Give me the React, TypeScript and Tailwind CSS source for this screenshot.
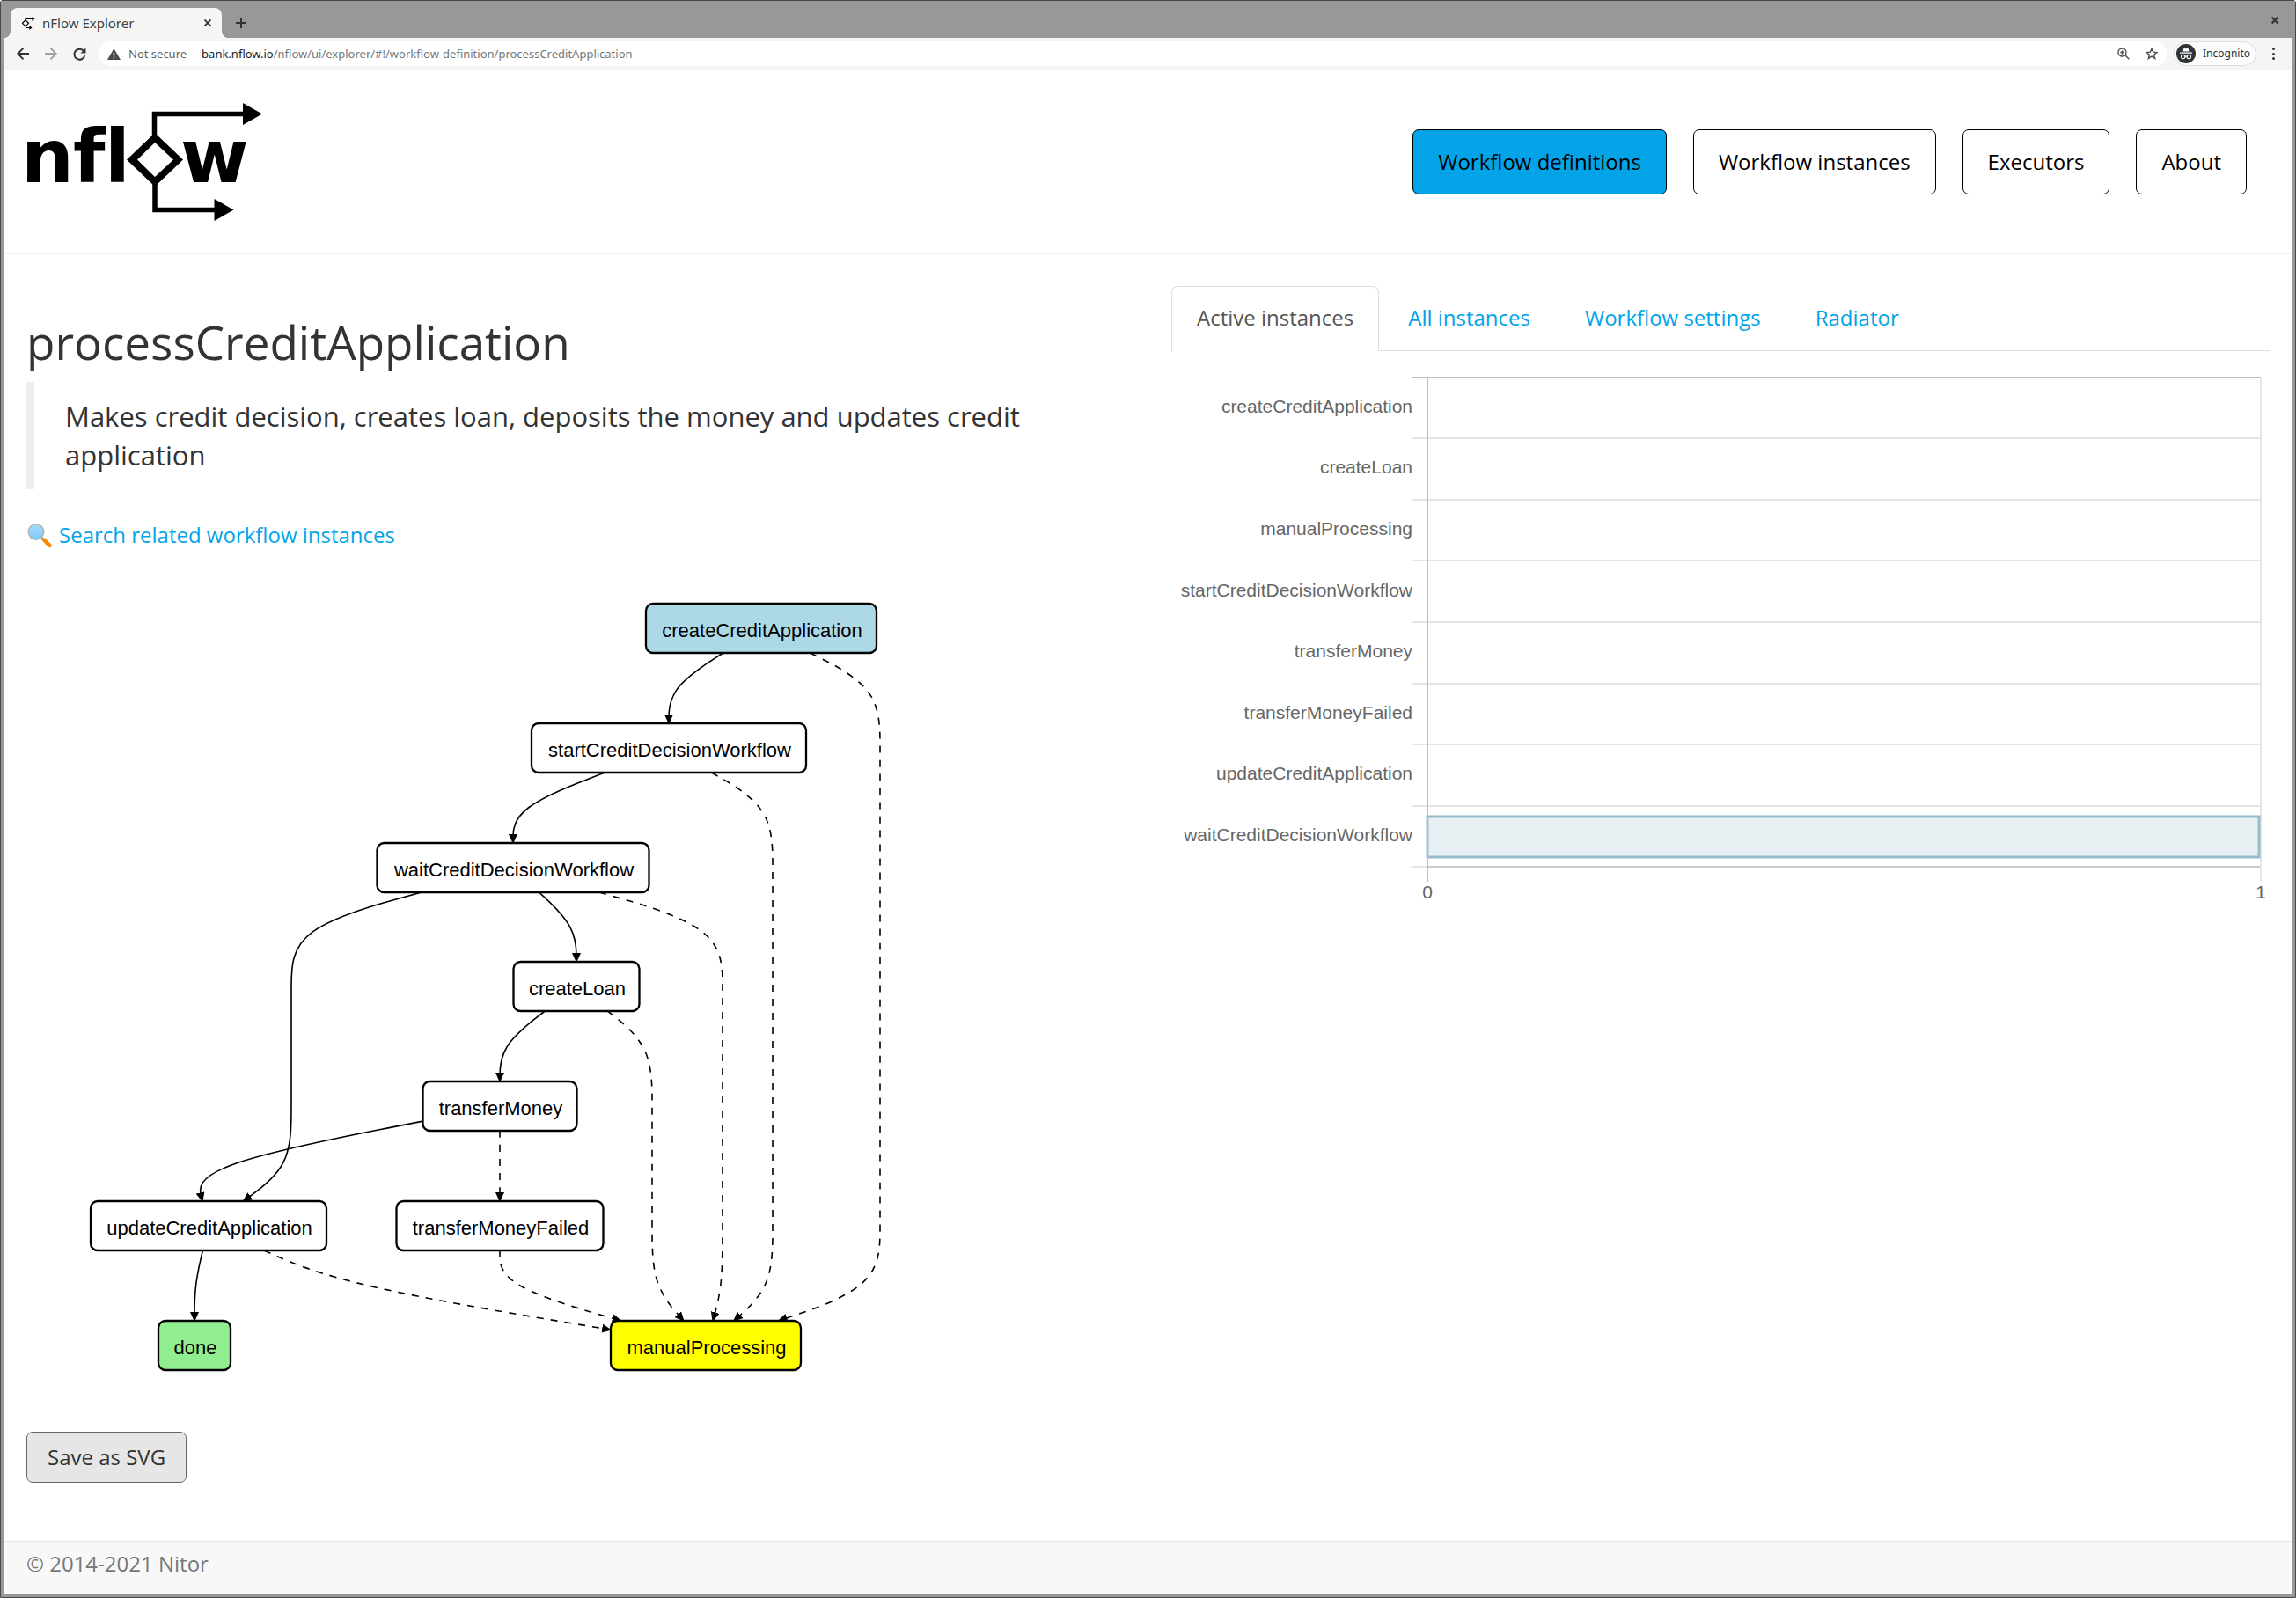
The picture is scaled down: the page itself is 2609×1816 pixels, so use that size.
import React from "react";

type Pt = [number, number];

type NodeSpec = {
  id: string;
  cx: number;
  cy: number;
  w: number;
  fill?: string;
};

const NODE_H = 56;

const NODES: NodeSpec[] = [
  { id: "createCreditApplication", cx: 865, cy: 715, w: 262, fill: "#add8e6" },
  { id: "startCreditDecisionWorkflow", cx: 760, cy: 851, w: 312 },
  { id: "waitCreditDecisionWorkflow", cx: 583, cy: 987, w: 309 },
  { id: "createLoan", cx: 655, cy: 1122, w: 143 },
  { id: "transferMoney", cx: 568, cy: 1258, w: 175 },
  { id: "updateCreditApplication", cx: 237, cy: 1394, w: 268 },
  { id: "transferMoneyFailed", cx: 568, cy: 1394, w: 235 },
  { id: "done", cx: 221, cy: 1530, w: 82, fill: "#90ee90" },
  { id: "manualProcessing", cx: 802, cy: 1530, w: 216, fill: "#ffff00" },
];

type EdgeSpec = { from: string; to: string; x: number; dashed?: boolean };

const EDGES: EdgeSpec[] = [
  { from: "createCreditApplication", to: "startCreditDecisionWorkflow", x: 760 },
  { from: "createCreditApplication", to: "manualProcessing", x: 1000, dashed: true },
  { from: "startCreditDecisionWorkflow", to: "waitCreditDecisionWorkflow", x: 583 },
  { from: "startCreditDecisionWorkflow", to: "manualProcessing", x: 878, dashed: true },
  { from: "waitCreditDecisionWorkflow", to: "createLoan", x: 655 },
  { from: "waitCreditDecisionWorkflow", to: "updateCreditApplication", x: 331 },
  { from: "waitCreditDecisionWorkflow", to: "manualProcessing", x: 821, dashed: true },
  { from: "createLoan", to: "transferMoney", x: 568 },
  { from: "createLoan", to: "manualProcessing", x: 741, dashed: true },
  { from: "transferMoney", to: "updateCreditApplication", x: 220 },
  { from: "transferMoney", to: "transferMoneyFailed", x: 568, dashed: true },
  { from: "updateCreditApplication", to: "done", x: 221 },
  { from: "updateCreditApplication", to: "manualProcessing", x: 390, dashed: true },
  { from: "transferMoneyFailed", to: "manualProcessing", x: 568, dashed: true },
];

const nodeById = (id: string) => NODES.find((n) => n.id === id) as NodeSpec;

/** Point where the line from a node's centre to `p` leaves the node's box. */
function boundary(n: NodeSpec, p: Pt): Pt {
  const dx = p[0] - n.cx;
  const dy = p[1] - n.cy;
  const s = Math.min(
    dx === 0 ? Infinity : n.w / 2 / Math.abs(dx),
    dy === 0 ? Infinity : NODE_H / 2 / Math.abs(dy),
  );
  return [n.cx + dx * s, n.cy + dy * s];
}

/** Cubic B-spline that starts and ends on the outer points. */
function basis(pts: Pt[]): string {
  const f = (v: number) => v.toFixed(1);
  let [x0, y0] = pts[0];
  let [x1, y1] = pts[1];
  let d = `M${f(x0)},${f(y0)}L${f((5 * x0 + x1) / 6)},${f((5 * y0 + y1) / 6)}`;
  const step = (x: number, y: number) => {
    d += `C${f((2 * x0 + x1) / 3)},${f((2 * y0 + y1) / 3)} ${f((x0 + 2 * x1) / 3)},${f((y0 + 2 * y1) / 3)} ${f((x0 + 4 * x1 + x) / 6)},${f((y0 + 4 * y1 + y) / 6)}`;
    x0 = x1;
    y0 = y1;
    x1 = x;
    y1 = y;
  };
  for (let i = 2; i < pts.length; i++) step(pts[i][0], pts[i][1]);
  const last = pts[pts.length - 1];
  step(last[0], last[1]);
  return d + `L${f(last[0])},${f(last[1])}`;
}

function edgePath(e: EdgeSpec): string {
  const a = nodeById(e.from);
  const b = nodeById(e.to);
  const mids: Pt[] = [];
  for (let y = a.cy + 68; y < b.cy - 20; y += 68) mids.push([e.x, y]);
  return basis([boundary(a, mids[0]), ...mids, boundary(b, mids[mids.length - 1])]);
}

function WorkflowGraph() {
  return (
    <svg
      className="mt-10 block h-auto w-[990px] max-w-full"
      viewBox="30 667 990 911"
      role="img"
      aria-label="Workflow state graph"
    >
      <defs>
        <marker id="arrow" viewBox="0 0 10 10" refX="9" refY="5" markerWidth="11" markerHeight="10" markerUnits="userSpaceOnUse" orient="auto" preserveAspectRatio="none">
          <path d="M0,0L10,5L0,10z" fill="#000" />
        </marker>
      </defs>
      {EDGES.map((e) => (
        <path
          key={e.from + e.to}
          d={edgePath(e)}
          fill="none"
          stroke="#000"
          strokeWidth="1.6"
          strokeDasharray={e.dashed ? "8 8" : undefined}
          markerEnd="url(#arrow)"
        />
      ))}
      {NODES.map((n) => (
        <g key={n.id}>
          <rect x={n.cx - n.w / 2} y={n.cy - NODE_H / 2} width={n.w} height={NODE_H} rx="8" fill={n.fill ?? "#fff"} stroke="#000" strokeWidth="2.3" />
          <text x={n.cx + 1} y={n.cy + 10} textAnchor="middle" className="font-['Liberation_Sans',Arial,sans-serif] text-[22px]">
            {n.id}
          </text>
        </g>
      ))}
    </svg>
  );
}

const STATES = [
  "createCreditApplication",
  "createLoan",
  "manualProcessing",
  "startCreditDecisionWorkflow",
  "transferMoney",
  "transferMoneyFailed",
  "updateCreditApplication",
  "waitCreditDecisionWorkflow",
];

function InstancesChart() {
  const top = 9;
  const step = 69.6;
  const x0 = 291;
  const x1 = 1238;
  const bottom = 565;
  return (
    <svg className="mt-[21px] block h-auto w-full" viewBox="0 0 1248 624" role="img" aria-label="Active instances by state">
      {STATES.map((s, i) => (
        <g key={s}>
          <line x1={x0 - 17} x2={x1} y1={Math.floor(top + step * i)} y2={Math.floor(top + step * i)} stroke={i === 0 ? "#bfbfbf" : "#e5e5e5"} strokeWidth="2" />
          <text x={x0 - 17} y={Math.round(top + step * (i + 0.5)) + 5} textAnchor="end" fill="#666" className="font-['Liberation_Sans',Arial,sans-serif] text-[21px]">
            {s}
          </text>
        </g>
      ))}
      <line x1={x0 - 17} x2={x0} y1={bottom} y2={bottom} stroke="#e5e5e5" strokeWidth="2" />
      <line x1={x0} x2={x1} y1={bottom} y2={bottom} stroke="#cbcbcb" strokeWidth="2" />
      <line x1={x1} x2={x1} y1={top} y2={bottom + 17} stroke="#e5e5e5" strokeWidth="2" />
      <rect x={x0} y="508" width={x1 - x0 - 2} height="46" fill="#e8f0f3" stroke="#97bbcd" strokeWidth="3" />
      <line x1={x0} x2={x0} y1={top} y2={bottom + 17} stroke="#bfbfbf" strokeWidth="2" />
      <text x={x0} y="601" textAnchor="middle" fill="#666" className="font-['Liberation_Sans',Arial,sans-serif] text-[21px]">0</text>
      <text x={x1} y="601" textAnchor="middle" fill="#666" className="font-['Liberation_Sans',Arial,sans-serif] text-[21px]">1</text>
    </svg>
  );
}

function Logo() {
  return (
    <svg className="block h-[140px] w-[280px]" viewBox="20 114 280 140" role="img" aria-label="nflow">
      <g className="font-['DejaVu_Sans',sans-serif] text-[84px] font-bold" fill="#000">
        <text x="24" y="207">n</text>
        <text x="83" y="207">f</text>
        <text x="119" y="207">l</text>
        <text x="205" y="207">w</text>
      </g>
      <path d="M176 151L208 181.500L176 212L144 181.500ZM176 162L156 181.500L176 201L197 181.500Z" fill="#000" fillRule="evenodd" />
      <path d="M175.500 155V129.500H278M176 208V238.500H245" fill="none" stroke="#000" strokeWidth="5.500" />
      <path d="M276 117L298 129.500L276 142ZM243.500 226L265.500 238.500L243.500 251Z" fill="#000" />
    </svg>
  );
}

function Favicon() {
  return (
    <svg className="size-4" viewBox="0 0 16 16" fill="none" stroke="#000" strokeWidth="1.200" aria-hidden="true">
      <path d="M5 4.800L8.500 8.300L5 11.800L1.500 8.300ZM5 5V3.500H13M5.500 11.500V13.500H10" />
      <path d="M12.500 1L15.500 3.500L12.500 6ZM9.500 11L12.500 13.500L9.500 16Z" fill="#000" stroke="none" />
    </svg>
  );
}

function BrowserBar() {
  return (
    <div className="bg-[#f6f5f4]">
      <div className="flex h-[42px] items-end justify-between bg-[#999896] pr-4">
        <div className="flex items-end">
          <div className="size-2 bg-[radial-gradient(circle_at_0_0,transparent_8px,#f6f5f4_8px)]" />
          <div className="flex h-[34px] w-[240px] items-center rounded-t-lg bg-[#f6f5f4] pr-2 pl-3">
            <Favicon />
            <span className="ml-2 flex-1 font-['Noto_Sans',sans-serif] text-[15px] leading-5 text-[#3c4043]">nFlow Explorer</span>
            <button aria-label="Close tab" className="flex size-4 items-center justify-center">
              <svg className="size-2" viewBox="0 0 8 8" stroke="#2e3436" strokeWidth="1.800"><path d="M0.500 0.500L7.500 7.500M7.500 0.500L0.500 7.500" /></svg>
            </button>
          </div>
          <div className="size-2 bg-[radial-gradient(circle_at_100%_0,transparent_8px,#f6f5f4_8px)]" />
          <button aria-label="New tab" className="mb-[11px] ml-2 size-3">
            <svg viewBox="0 0 12 12" stroke="#2e3436" strokeWidth="2"><path d="M6 0V12M0 6H12" /></svg>
          </button>
        </div>
        <button aria-label="Close window" className="mb-4 size-2">
          <svg viewBox="0 0 8 8" stroke="#2e3436" strokeWidth="2.200"><path d="M0.500 0.500L7.500 7.500M7.500 0.500L0.500 7.500" /></svg>
        </button>
      </div>
      <div className="flex h-[37px] items-center border-b border-[#c0bfbc] pr-5 pl-[15px]">
        <button aria-label="Back" className="size-[14px]">
          <svg viewBox="0 0 14 14" fill="none" stroke="#2e3436" strokeWidth="1.900"><path d="M14 7H1.500M7.500 0.700L1.300 7L7.500 13.300" /></svg>
        </button>
        <button aria-label="Forward" className="ml-[18px] size-[14px]">
          <svg viewBox="0 0 14 14" fill="none" stroke="#a0a0a0" strokeWidth="1.900"><path d="M0 7H12.500M6.500 0.700L12.700 7L6.500 13.300" /></svg>
        </button>
        <button aria-label="Reload" className="ml-[18px] size-[15px]">
          <svg viewBox="0 0 15 15" fill="none" stroke="#2e3436" strokeWidth="2"><path d="M12.600 4.500A6 6 0 1 0 13.300 9.300" /><path d="M14.500 0.500V6.500H8.500Z" fill="#2e3436" stroke="none" /></svg>
        </button>
        <div className="ml-[14px] flex h-7 flex-1 items-center rounded-full bg-white px-[10px] font-['Noto_Sans',sans-serif] text-[13px] leading-5">
          <svg className="h-[13px] w-[15px]" viewBox="0 0 15 13" aria-hidden="true"><path d="M7.500 0L15 13H0Z" fill="#4a4a4a" /><path d="M7.500 4.500V8.500M7.500 9.700V11.300" stroke="#fff" strokeWidth="1.500" /></svg>
          <span className="ml-[9px] text-[#5f6368]">Not secure</span>
          <span className="mx-2 h-4 w-px bg-[#9a9a9a]" />
          <label htmlFor="address" className="text-[#202124]">bank.nflow.io</label>
          <input
            id="address"
            type="text"
            className="min-w-0 flex-1 bg-transparent p-0 text-[#74777a] outline-none"
            defaultValue="/nflow/ui/explorer/#!/workflow-definition/processCreditApplication"
          />
          <button aria-label="Zoom" className="size-[14px]">
            <svg viewBox="0 0 14 14" fill="none" stroke="#4a4d50" strokeWidth="1.400"><circle cx="5.500" cy="5.500" r="4.500" /><path d="M9 9L13.300 13.300M5.500 3.300V7.700M3.300 5.500H7.700" /></svg>
          </button>
          <button aria-label="Bookmark this page" className="ml-[18px] size-[14px]">
            <svg viewBox="0 0 14 14" fill="none" stroke="#4a4d50" strokeWidth="1.400"><path d="M7 1.300L8.600 5.200L12.900 5.500L9.600 8.200L10.700 12.400L7 10.100L3.300 12.400L4.400 8.200L1.100 5.500L5.400 5.200Z" /></svg>
          </button>
        </div>
        <button className="ml-2 flex h-7 items-center rounded-full border border-[#dcdcdf] bg-[#fcfcfc] pr-[6px] pl-[2px] font-['Noto_Sans',sans-serif] text-[12px] leading-5 text-[#2e3436]">
          <svg className="mr-2 size-[22px]" viewBox="0 0 22 22" aria-hidden="true">
            <circle cx="11" cy="11" r="11" fill="#2e3436" />
            <path d="M7.500 8.500L8.500 4.500L11 5.200L13.500 4.500L14.500 8.500ZM4 9.500H18V10.700H4Z" fill="#fff" />
            <g fill="none" stroke="#fff" strokeWidth="1.200"><circle cx="7.700" cy="14.500" r="2.200" /><circle cx="14.300" cy="14.500" r="2.200" /><path d="M9.900 14.200H12.100" /></g>
          </svg>
          Incognito
        </button>
        <button aria-label="Menu" className="ml-[18px] flex h-4 w-[3px] flex-col justify-between py-[1px]">
          <span className="size-[3px] rounded-full bg-[#2e3436]" />
          <span className="size-[3px] rounded-full bg-[#2e3436]" />
          <span className="size-[3px] rounded-full bg-[#2e3436]" />
        </button>
      </div>
    </div>
  );
}

function MagnifierIcon() {
  return (
    <svg className="mr-2 size-[29px]" viewBox="0 0 29 29" aria-hidden="true">
      <defs>
        <linearGradient id="glass" x1="0" y1="0" x2="0" y2="1">
          <stop offset="0" stopColor="#a8dcfb" />
          <stop offset="1" stopColor="#7cc8f8" />
        </linearGradient>
      </defs>
      <path d="M17 17L20 20" stroke="#8d9aa0" strokeWidth="3" />
      <path d="M20.500 20L26.500 26" stroke="#f58b00" strokeWidth="4.500" strokeLinecap="round" />
      <circle cx="11" cy="10.500" r="8.700" fill="url(#glass)" stroke="#b3b9bd" strokeWidth="1.800" />
    </svg>
  );
}

const NAV = ["Workflow definitions", "Workflow instances", "Executors", "About"];
const TABS = ["Active instances", "All instances", "Workflow settings", "Radiator"];

export default function App() {
  return (
    <div className="flex min-h-screen flex-col rounded-t-[3px] border border-[#484848] bg-white font-['Open_Sans',sans-serif] text-[24px] leading-9 text-[#333]">
      <div className="flex flex-1 flex-col border-3 border-t-0 border-[#999896]">
        <BrowserBar />
        <header className="flex h-[209px] items-center justify-between border-b border-[#eee] pr-[52px] pl-4">
          <a href="#home"><Logo /></a>
          <nav className="flex gap-[30px]">
            {NAV.map((label, i) => (
              <a
                key={label}
                href="#nav"
                className={
                  i === 0
                    ? "rounded-[7px] border border-black bg-[#03a4e7] px-7 py-[18px] text-black"
                    : "rounded-[7px] border border-black px-7 py-[18px] text-black"
                }
              >
                {label}
              </a>
            ))}
          </nav>
        </header>
        <main className="grid flex-1 grid-cols-2 content-start gap-[53px] px-[26px] pt-9">
          <section>
            <h1 className="mt-[35px] text-[53px] leading-[58px]">processCreditApplication</h1>
            <blockquote className="mt-4 border-l-[9px] border-[#eee] py-[17px] pl-[35px] text-[31px] leading-[44px]">
              Makes credit decision, creates loan, deposits the money and updates credit application
            </blockquote>
            <a href="#search" className="mt-[34px] flex items-center text-[#03a4e7]">
              <MagnifierIcon />
              Search related workflow instances
            </a>
            <WorkflowGraph />
            <button className="mt-[50px] rounded-[7px] border border-[#666] bg-[#e6e6e6] px-[23px] py-[10px]">Save as SVG</button>
          </section>
          <section>
            <div role="tablist" className="flex border-b border-[#ddd]">
              {TABS.map((label, i) => (
                <button
                  key={label}
                  role="tab"
                  aria-selected={i === 0}
                  className={
                    i === 0
                      ? "-mb-px rounded-t-[7px] border border-b-0 border-[#ddd] bg-white px-7 pt-[17px] pb-5 text-[#555]"
                      : "ml-1 border border-transparent px-7 pt-[17px] pb-[18px] text-[#03a4e7]"
                  }
                >
                  {label}
                </button>
              ))}
            </div>
            <InstancesChart />
          </section>
        </main>
        <footer className="mt-10 border-t border-[#e7e7e7] bg-[#f8f8f8] px-[26px] pt-[7px] pb-[17px] text-[#777]">© 2014-2021 Nitor</footer>
      </div>
    </div>
  );
}
